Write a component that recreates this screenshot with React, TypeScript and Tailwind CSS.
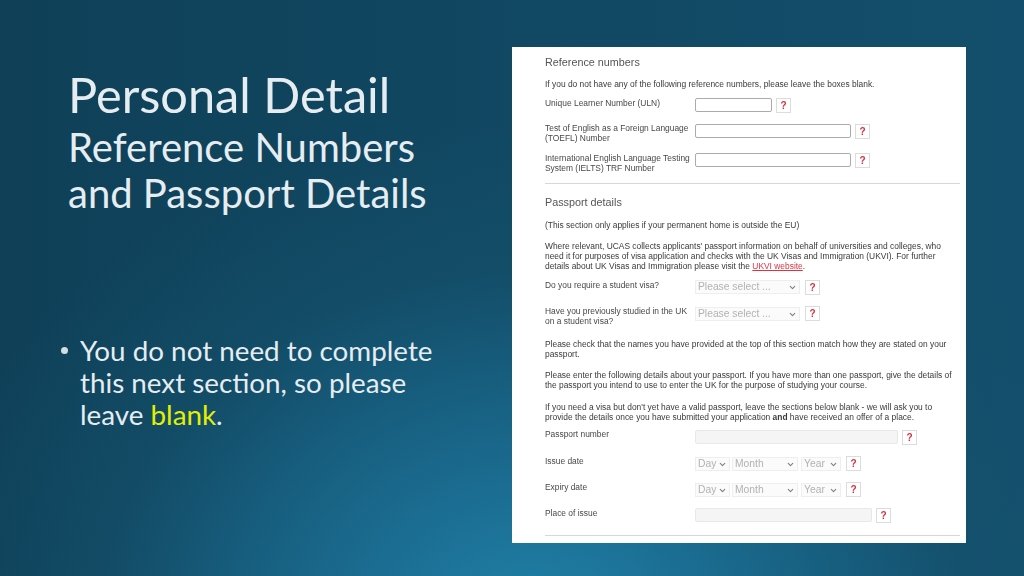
import type { ReactNode } from "react";
import { ChevronDown } from "lucide-react";

function Help() {
  return (
    <div className="ml-[4px] flex h-[15px] w-[15px] shrink-0 items-center justify-center border border-[#dcdcdc] bg-white text-[10px] leading-none font-bold text-[#d9303f]">
      ?
    </div>
  );
}

function TextBox({ width, disabled }: { width: string; disabled?: boolean }) {
  return (
    <input
      disabled={disabled}
      className={
        width +
        " h-[14px] rounded-[2px] border " +
        (disabled ? "border-[#e8e8e8] bg-[#f5f5f5]" : "border-[#ababab] bg-white")
      }
    />
  );
}

function Dropdown({ width, text }: { width: string; text: string }) {
  return (
    <div className={width + " relative h-[14px]"}>
      <select
        disabled
        defaultValue={text}
        className="h-full w-full appearance-none border border-[#eeeeee] bg-[#fbfbfb] pl-[2px] text-[10.3px] leading-none text-[#b2b2b2] opacity-100"
      >
        <option>{text}</option>
      </select>
      <ChevronDown
        size={9}
        strokeWidth={3}
        className="absolute top-[3px] right-[3px] text-[#808080]"
      />
    </div>
  );
}

function Row({
  label,
  className,
  labelClass,
  children,
}: {
  label: ReactNode;
  className: string;
  labelClass?: string;
  children: ReactNode;
}) {
  return (
    <div className={"flex items-start " + className}>
      <div className={"w-[150px] shrink-0 whitespace-nowrap text-[#484848] " + (labelClass ?? "")}>{label}</div>
      {children}
    </div>
  );
}

function DateRow({ label, className }: { label: string; className: string }) {
  return (
    <Row label={label} className={className}>
      <div className="flex gap-[2px] pt-[1px]">
        <Dropdown width="w-[35px]" text="Day" />
        <Dropdown width="w-[66px]" text="Month" />
        <Dropdown width="w-[40px] ml-[1px]" text="Year" />
      </div>
      <div className="ml-[1px]">
        <Help />
      </div>
    </Row>
  );
}

export default function App() {
  return (
    <div className="flex h-[576px] w-[1024px] overflow-hidden bg-[radial-gradient(ellipse_620px_500px_at_52%_108%,#2080a8_0%,#1a6a8eee_35%,#15536f88_70%,transparent_100%),linear-gradient(90deg,#0f4058,#134f6c)] font-['Liberation_Sans',sans-serif]">
      <div className="w-[512px] shrink-0 font-['Lato',sans-serif] text-[#e6edf1]">
        <div className="pt-[64px] pl-[68px]">
          <h1 className="text-[48.7px] leading-[60px]">Personal Detail</h1>
          <h2 className="mt-[1px] text-[40px] leading-[45.5px]">
            Reference Numbers
            <br />
            and Passport Details
          </h2>
        </div>
        <div className="relative mt-[119px] pl-[80px] text-[27.8px] leading-[32px]">
          <span className="absolute top-[12px] left-[61px] h-[7px] w-[7px] rounded-full bg-[#d6dde0]" />
          You do not need to complete
          <br />
          this next section, so please
          <br />
          leave <span className="text-[#e4f000]">blank</span>.
        </div>
      </div>

      <div className="mt-[47px] h-[496px] w-[454px] bg-white pt-[8px] pr-[6px] pl-[33px] text-[8.42px] leading-[10px] text-[#3a3a3a] blur-[0.3px]">
        <h3 className="h-[14px] text-[10.8px] leading-[14px] text-[#555]">Reference numbers</h3>
        <p className="mt-[10px]">
          If you do not have any of the following reference numbers, please leave the boxes blank.
        </p>
        <Row label="Unique Learner Number (ULN)" className="mt-[9px]">
          <TextBox width="w-[77px]" />
          <Help />
        </Row>
        <Row
          label={
            <>
              Test of English as a Foreign Language
              <br />
              (TOEFL) Number
            </>
          }
          className="mt-[10px] h-[20px]"
        >
          <div className="flex pt-[1px]">
            <TextBox width="w-[156px]" />
            <Help />
          </div>
        </Row>
        <Row
          label={
            <>
              International English Language Testing
              <br />
              System (IELTS) TRF Number
            </>
          }
          className="mt-[10px] h-[20px]"
        >
          <TextBox width="w-[156px]" />
          <Help />
        </Row>
        <hr className="mt-[10px] border-[#d8d8d8]" />

        <h3 className="mt-[11px] h-[14px] text-[10.8px] leading-[14px] text-[#555]">Passport details</h3>
        <p className="mt-[11px]">(This section only applies if your permanent home is outside the EU)</p>
        <p className="mt-[11px]">
          Where relevant, UCAS collects applicants' passport information on behalf of universities and colleges, who
          <br />
          need it for purposes of visa application and checks with the UK Visas and Immigration (UKVI). For further
          <br />
          details about UK Visas and Immigration please visit the{" "}
          <span className="text-[#e0323e] underline">UKVI website</span>.
        </p>
        <Row label="Do you require a student visa?" className="mt-[9px] h-[15px]">
          <Dropdown width="w-[105px]" text="Please select ..." />
          <div className="ml-[1px]">
            <Help />
          </div>
        </Row>
        <Row
          label={
            <>
              Have you previously studied in the UK
              <br />
              on a student visa?
            </>
          }
          className="mt-[11px] h-[20px]"
        >
          <div className="pt-[1px]">
            <Dropdown width="w-[105px]" text="Please select ..." />
          </div>
          <div className="ml-[1px]">
            <Help />
          </div>
        </Row>
        <p className="mt-[13px]">
          Please check that the names you have provided at the top of this section match how they are stated on your
          <br />
          passport.
        </p>
        <p className="mt-[11px] whitespace-nowrap">
          Please enter the following details about your passport. If you have more than one passport, give the details of
          <br />
          the passport you intend to use to enter the UK for the purpose of studying your course.
        </p>
        <p className="mt-[12px]">
          If you need a visa but don't yet have a valid passport, leave the sections below blank - we will ask you to
          <br />
          provide the details once you have submitted your application <b>and</b> have received an offer of a place.
        </p>
        <Row label="Passport number" className="mt-[8px] h-[15px]" labelClass="-mt-[1px]">
          <TextBox width="w-[203px]" disabled />
          <Help />
        </Row>
        <DateRow label="Issue date" className="mt-[11px] h-[15px]" />
        <DateRow label="Expiry date" className="mt-[11px] h-[15px]" />
        <Row label="Place of issue" className="mt-[11px] h-[15px]">
          <TextBox width="w-[177px]" disabled />
          <Help />
        </Row>
        <hr className="mt-[12px] border-[#d8d8d8]" />
      </div>
    </div>
  );
}
